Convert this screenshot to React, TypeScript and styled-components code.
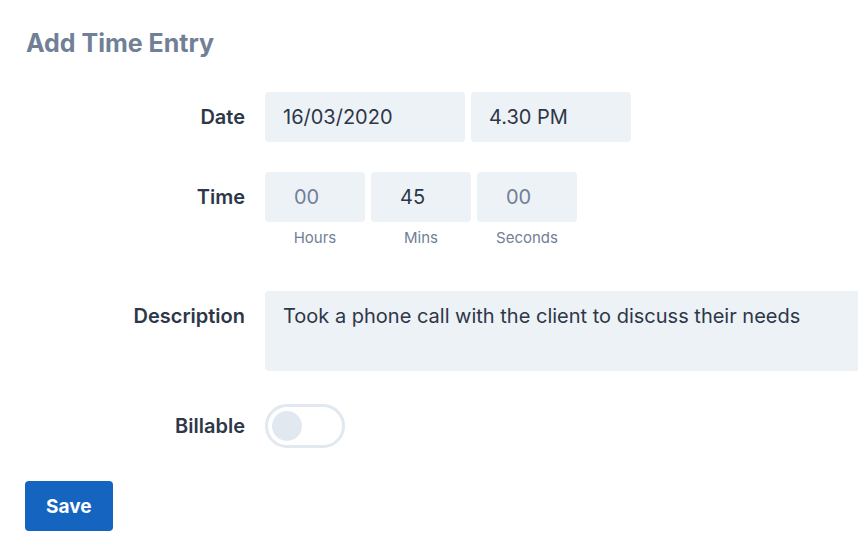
import React from "react";
import styled, { createGlobalStyle } from "styled-components";

const GlobalStyle = createGlobalStyle`
  html, body {
    margin: 0;
    padding: 0;
    background: #fff;
    overflow: hidden;
  }
  body {
    font-family: Inter, "Noto Sans", "Liberation Sans", sans-serif;
    color: #2d3748;
  }
  * {
    box-sizing: border-box;
  }
`;

export default function App() {
  const [billable, setBillable] = React.useState(false);

  return (
    <Wrapper>
      <GlobalStyle />
      <Title>Add Time Entry</Title>

      <Row>
        <Label>Date</Label>
        <Controls>
          <Field $width={200} defaultValue="16/03/2020" />
          <Field $width={160} defaultValue="4.30 PM" />
        </Controls>
      </Row>

      <Row $mb={43}>
        <Label>Time</Label>
        <Controls>
          <Unit>
            <Field $width={100} $pad={29} placeholder="00" />
            <UnitLabel>Hours</UnitLabel>
          </Unit>
          <Unit>
            <Field $width={100} $pad={29} defaultValue="45" />
            <UnitLabel>Mins</UnitLabel>
          </Unit>
          <Unit>
            <Field $width={100} $pad={29} placeholder="00" />
            <UnitLabel>Seconds</UnitLabel>
          </Unit>
        </Controls>
      </Row>

      <Row>
        <Label>Description</Label>
        <Description defaultValue="Took a phone call with the client to discuss their needs" />
      </Row>

      <Row $center>
        <Label>Billable</Label>
        <Toggle
          type="button"
          $on={billable}
          onClick={() => setBillable((v) => !v)}
        >
          <Knob $on={billable} />
        </Toggle>
      </Row>

      <SaveButton type="button">Save</SaveButton>
    </Wrapper>
  );
}

const Wrapper = styled.div`
  padding: 27px 0 0 25px;
`;

const Title = styled.h2`
  margin: 0 0 33px 1px;
  font-size: 25px;
  line-height: 32px;
  font-weight: 700;
  color: #718096;
`;

const Row = styled.div<{ $mb?: number; $center?: boolean }>`
  display: flex;
  align-items: ${(p) => (p.$center ? "center" : "flex-start")};
  gap: 20px;
  margin-bottom: ${(p) => p.$mb ?? 30}px;
`;

const Label = styled.div`
  width: 220px;
  flex-shrink: 0;
  text-align: right;
  font-size: 20px;
  line-height: 50px;
  font-weight: 600;
  color: #2d3748;
`;

const Controls = styled.div`
  display: flex;
  align-items: flex-start;
  gap: 6px;
`;

const Field = styled.input<{ $width: number; $pad?: number }>`
  width: ${(p) => p.$width}px;
  height: 50px;
  padding: 0 ${(p) => p.$pad ?? 18}px;
  border: none;
  outline: none;
  border-radius: 4px;
  background: #edf2f7;
  font-family: inherit;
  font-size: 20px;
  color: #2d3748;

  &::placeholder {
    color: #718096;
    opacity: 1;
  }
`;

const Unit = styled.div`
  display: flex;
  flex-direction: column;
  align-items: center;
`;

const UnitLabel = styled.span`
  margin-top: 6px;
  font-size: 15px;
  line-height: 20px;
  color: #718096;
`;

const Description = styled.textarea`
  width: 640px;
  height: 80px;
  flex-shrink: 0;
  padding: 10px 18px;
  border: none;
  outline: none;
  resize: none;
  border-radius: 4px;
  background: #edf2f7;
  font-family: inherit;
  font-size: 20px;
  line-height: 30px;
  color: #2d3748;
`;

const Toggle = styled.button<{ $on: boolean }>`
  display: flex;
  align-items: center;
  width: 80px;
  height: 44px;
  padding: 0 4px;
  border: 3px solid ${(p) => (p.$on ? "#1565c0" : "#e2e8f0")};
  border-radius: 22px;
  background: ${(p) => (p.$on ? "#1565c0" : "#fff")};
  cursor: pointer;
`;

const Knob = styled.span<{ $on: boolean }>`
  width: 30px;
  height: 30px;
  border-radius: 50%;
  background: ${(p) => (p.$on ? "#fff" : "#e2e8f0")};
  margin-left: ${(p) => (p.$on ? "auto" : "0")};
`;

const SaveButton = styled.button`
  display: block;
  height: 50px;
  padding: 0 21px;
  border: none;
  border-radius: 4px;
  background: #1565c0;
  color: #fff;
  font-family: inherit;
  font-size: 19px;
  font-weight: 700;
  cursor: pointer;
`;
